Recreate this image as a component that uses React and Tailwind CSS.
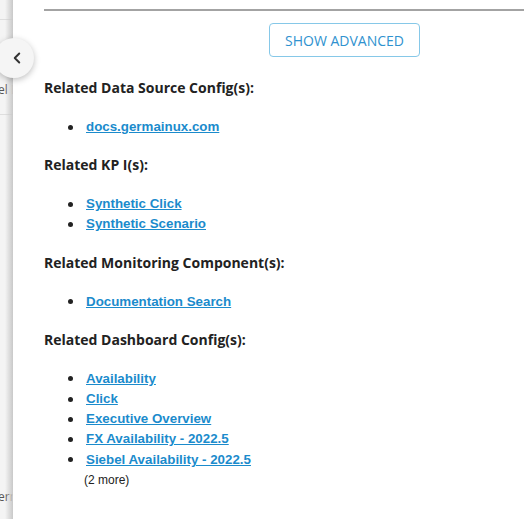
import { ChevronLeft } from 'lucide-react';

const sections = [
  { title: 'Related Data Source Config(s):', items: ['docs.germainux.com'] },
  { title: 'Related KP I(s):', items: ['Synthetic Click', 'Synthetic Scenario'] },
  { title: 'Related Monitoring Component(s):', items: ['Documentation Search'] },
  {
    title: 'Related Dashboard Config(s):',
    items: ['Availability', 'Click', 'Executive Overview', 'FX Availability - 2022.5', 'Siebel Availability - 2022.5'],
    more: '(2 more)',
  },
];

const App = () => {
  return (
    <div className="relative flex h-[519px] w-[524px] overflow-hidden bg-white">
      {/* page behind the drawer */}
      <div className="relative w-[13px] shrink-0 overflow-hidden bg-[#f4f4f4] font-['Open_Sans',sans-serif] text-[12px] text-[#555]">
        <div className="h-[20px] border-b border-[#dedede]" />
        <div className="flex h-[95px] items-end whitespace-nowrap border-b border-[#dedede] pb-[16px] leading-[16px]">
          <span className="-ml-[2px]">el L</span>
        </div>
        <div className="absolute left-0 top-[489px] whitespace-nowrap leading-[16px]">
          <span className="-ml-[2px]">erm</span>
        </div>
        <div className="absolute inset-y-0 right-0 w-[8px] bg-gradient-to-r from-transparent to-[#c9c9c9]" />
      </div>

      {/* drawer */}
      <div className="flex-1 pl-[31px] pt-[9px] font-['Open_Sans',sans-serif]">
        <div className="border-t-2 border-[#a3a3a3]" />
        <div className="ml-[225px] mt-[12px]">
          <button className="h-[34px] w-[151px] rounded border border-[#86c8e8] text-[14px] text-[#3092cf]">
            SHOW ADVANCED
          </button>
        </div>

        <div className="mt-[21px]">
          {sections.map((s) => (
            <div key={s.title} className="mb-[18px]">
              <h3 className="text-[14px] font-bold leading-[20px] text-[#222]">{s.title}</h3>
              <ul className="mt-[19px] pl-[24px] font-['Liberation_Sans',Arial,sans-serif] text-[13.33px] font-bold leading-[20.2px]">
                {s.items.map((item) => (
                  <li key={item} className="flex items-center gap-[13px]">
                    <span className="h-[5px] w-[5px] rounded-full bg-[#222]" />
                    <a href="#" className="text-[#1b8bcc] underline">{item}</a>
                  </li>
                ))}
              </ul>
              {s.more && (
                <div className="pl-[40px] pt-[1px] font-['Liberation_Sans',Arial,sans-serif] text-[12px] leading-[18px] text-[#222]">
                  {s.more}
                </div>
              )}
            </div>
          ))}
        </div>
      </div>

      {/* collapse toggle */}
      <button className="absolute left-[-6px] top-[38px] flex h-[40px] w-[40px] items-center justify-center rounded-full bg-[#f5f5f5] pl-[6px] shadow-[0_2px_6px_rgba(0,0,0,0.25)]">
        <ChevronLeft size={18} strokeWidth={2.6} className="text-[#333]" />
      </button>
    </div>
  );
};

export default App;
